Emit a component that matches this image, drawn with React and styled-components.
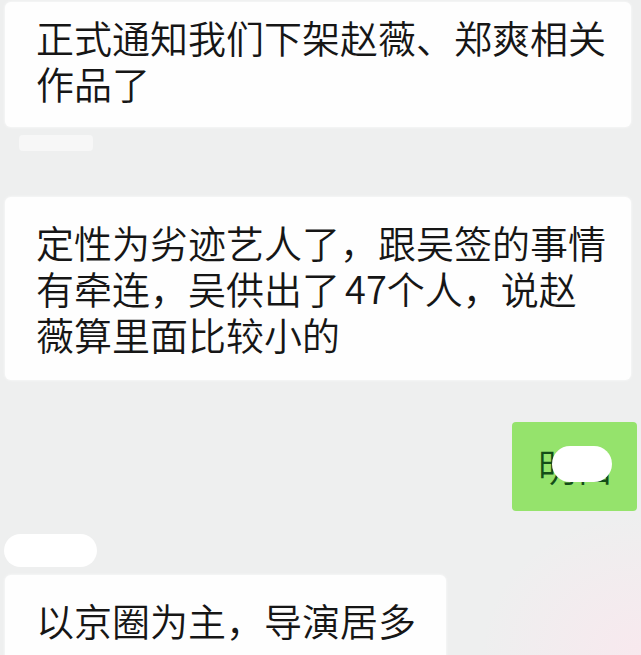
import styled, { createGlobalStyle } from "styled-components";

const GlobalStyle = createGlobalStyle`
    html, body {
        margin: 0;
        padding: 0;
        background-color: #eeefef;
    }
    body {
        font-family: "Noto Sans CJK SC", "Noto Sans", sans-serif;
        color: #161616;
        overflow: hidden;
    }
`;

const Page = styled.div`
    width: 641px;
    height: 655px;
    overflow: hidden;
    display: flex;
    flex-direction: column;
    padding: 2px 4px 0 5px;
    box-sizing: border-box;
    background-image: radial-gradient(
        ellipse 160px 140px at 100% 100%,
        rgba(249, 232, 238, 0.9),
        rgba(249, 232, 238, 0) 100%
    );
`;

const Bubble = styled.div`
    background-color: #fefefe;
    border-radius: 6px;
    box-shadow: 0 0 3px rgba(255, 255, 255, 0.9);
    font-size: 38px;
    font-weight: 350;
    line-height: 46px;
    padding: ${(props) => (props.$tight ? "12px 30px 21px 31px" : "22px 30px 23px 31px")};
    align-self: ${(props) => (props.$wide ? "stretch" : "flex-start")};
    margin-right: ${(props) => (props.$wide ? "6px" : "0")};
    flex-shrink: 0;
    white-space: nowrap;
`;

const Num = styled.span`
    margin-left: 5px;
`;

const NameBar = styled.div`
    width: 74px;
    height: 16px;
    margin: 8px 0 46px 14px;
    border-radius: 4px;
    background-color: #f7f7f7;
    flex-shrink: 0;
`;

const OutRow = styled.div`
    display: flex;
    justify-content: flex-end;
    margin-top: 42px;
    flex-shrink: 0;
`;

const GreenBubble = styled.div`
    position: relative;
    background-color: #95e36c;
    border-radius: 4px;
    font-size: 38px;
    font-weight: 350;
    line-height: 46px;
    color: #134d18;
    padding: 20px 23px 23px 26px;
`;

const Censor = styled.span`
    position: absolute;
    background-color: #fff;
    border-radius: 18px;
    left: ${(props) => props.$left}px;
    top: ${(props) => props.$top}px;
    width: ${(props) => props.$w}px;
    height: ${(props) => props.$h}px;
`;

const NameBlob = styled.div`
    width: 93px;
    height: 33px;
    margin: 23px 0 8px -1px;
    border-radius: 17px;
    background-color: #fff;
    flex-shrink: 0;
`;

export default function App() {
    return (
        <>
            <GlobalStyle />
            <Page>
                <Bubble $wide $tight>
                    正式通知我们下架赵薇、郑爽相关
                    <br />
                    作品了
                </Bubble>
                <NameBar />
                <Bubble $wide>
                    定性为劣迹艺人了，跟吴签的事情
                    <br />
                    有牵连，吴供出了<Num>47</Num>个人，说赵
                    <br />
                    薇算里面比较小的
                </Bubble>
                <OutRow>
                    <GreenBubble>
                        明白
                        <Censor $left={40} $top={24} $w={60} $h={36} />
                    </GreenBubble>
                </OutRow>
                <NameBlob />
                <Bubble>以京圈为主，导演居多</Bubble>
            </Page>
        </>
    );
}
